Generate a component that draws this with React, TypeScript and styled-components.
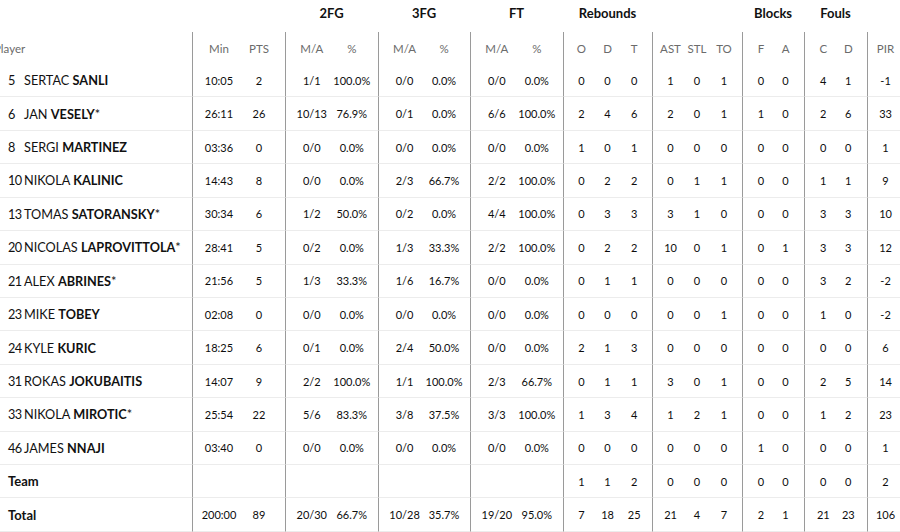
import React from "react";
import styled, { createGlobalStyle } from "styled-components";

const GlobalStyle = createGlobalStyle`
  html, body { margin: 0; padding: 0; background: #fff; }
  body { width: 900px; height: 532px; overflow: hidden; font-family: Lato, "Liberation Sans", sans-serif; color: #111; }
`;

type Player = {
  no: string;
  first: string;
  last: string;
  starter?: boolean;
  stats: string[];
};

const players: Player[] = [
  { no: "5", first: "SERTAC", last: "SANLI", stats: ["10:05", "2", "1/1", "100.0%", "0/0", "0.0%", "0/0", "0.0%", "0", "0", "0", "1", "0", "1", "0", "0", "4", "1", "-1"] },
  { no: "6", first: "JAN", last: "VESELY", starter: true, stats: ["26:11", "26", "10/13", "76.9%", "0/1", "0.0%", "6/6", "100.0%", "2", "4", "6", "2", "0", "1", "1", "0", "2", "6", "33"] },
  { no: "8", first: "SERGI", last: "MARTINEZ", stats: ["03:36", "0", "0/0", "0.0%", "0/0", "0.0%", "0/0", "0.0%", "1", "0", "1", "0", "0", "0", "0", "0", "0", "0", "1"] },
  { no: "10", first: "NIKOLA", last: "KALINIC", stats: ["14:43", "8", "0/0", "0.0%", "2/3", "66.7%", "2/2", "100.0%", "0", "2", "2", "0", "1", "1", "0", "0", "1", "1", "9"] },
  { no: "13", first: "TOMAS", last: "SATORANSKY", starter: true, stats: ["30:34", "6", "1/2", "50.0%", "0/2", "0.0%", "4/4", "100.0%", "0", "3", "3", "3", "1", "0", "0", "0", "3", "3", "10"] },
  { no: "20", first: "NICOLAS", last: "LAPROVITTOLA", starter: true, stats: ["28:41", "5", "0/2", "0.0%", "1/3", "33.3%", "2/2", "100.0%", "0", "2", "2", "10", "0", "1", "0", "1", "3", "3", "12"] },
  { no: "21", first: "ALEX", last: "ABRINES", starter: true, stats: ["21:56", "5", "1/3", "33.3%", "1/6", "16.7%", "0/0", "0.0%", "0", "1", "1", "0", "0", "0", "0", "0", "3", "2", "-2"] },
  { no: "23", first: "MIKE", last: "TOBEY", stats: ["02:08", "0", "0/0", "0.0%", "0/0", "0.0%", "0/0", "0.0%", "0", "0", "0", "0", "0", "1", "0", "0", "1", "0", "-2"] },
  { no: "24", first: "KYLE", last: "KURIC", stats: ["18:25", "6", "0/1", "0.0%", "2/4", "50.0%", "0/0", "0.0%", "2", "1", "3", "0", "0", "0", "0", "0", "0", "0", "6"] },
  { no: "31", first: "ROKAS", last: "JOKUBAITIS", stats: ["14:07", "9", "2/2", "100.0%", "1/1", "100.0%", "2/3", "66.7%", "0", "1", "1", "3", "0", "1", "0", "0", "2", "5", "14"] },
  { no: "33", first: "NIKOLA", last: "MIROTIC", starter: true, stats: ["25:54", "22", "5/6", "83.3%", "3/8", "37.5%", "3/3", "100.0%", "1", "3", "4", "1", "2", "1", "0", "0", "1", "2", "23"] },
  { no: "46", first: "JAMES", last: "NNAJI", stats: ["03:40", "0", "0/0", "0.0%", "0/0", "0.0%", "0/0", "0.0%", "0", "0", "0", "0", "0", "0", "1", "0", "0", "0", "1"] },
];

const teamStats = ["", "", "", "", "", "", "", "", "1", "1", "2", "0", "0", "0", "0", "0", "0", "0", "2"];
const totalStats = ["200:00", "89", "20/30", "66.7%", "10/28", "35.7%", "19/20", "95.0%", "7", "18", "25", "21", "4", "7", "2", "1", "21", "23", "106"];

const groups = [
  { label: "", subs: ["Min", "PTS"], widths: [47, 46] },
  { label: "2FG", subs: ["M/A", "%"], widths: [46.5, 46.5] },
  { label: "3FG", subs: ["M/A", "%"], widths: [46, 46] },
  { label: "FT", subs: ["M/A", "%"], widths: [46.5, 46.5] },
  { label: "Rebounds", subs: ["O", "D", "T"], widths: [29.67, 29.66, 29.67] },
  { label: "", subs: ["AST", "STL", "TO"], widths: [30, 30, 30] },
  { label: "Blocks", subs: ["F", "A"], widths: [31, 31] },
  { label: "Fouls", subs: ["C", "D"], widths: [31.5, 31.5] },
  { label: "", subs: ["PIR"], widths: [36] },
];

type Pos = { first: boolean; last: boolean; single: boolean };
const positions: Pos[] = groups.flatMap((g) =>
  g.subs.map((_, i) => ({
    first: i === 0,
    last: i === g.subs.length - 1,
    single: g.subs.length === 1,
  }))
);

const Wrapper = styled.div`
  width: 900px;
  height: 532px;
  overflow: hidden;
`;

const Table = styled.table`
  margin-left: -6px;
  width: 909px;
  table-layout: fixed;
  border-collapse: separate;
  border-spacing: 0;
`;

const GroupRow = styled.tr`
  height: 32px;
`;

const GroupTh = styled.th`
  padding: 0 0 7px 0;
  font-size: 13px;
  font-weight: 700;
  color: #111;
  text-align: center;
  vertical-align: middle;
  white-space: nowrap;
`;

const SubRow = styled.tr`
  height: 32px;
`;

const SubTh = styled.th<{ $first: boolean; $last: boolean; $single: boolean }>`
  padding: 0 ${(p) => (p.$last && !p.$single ? 6 : 0)}px 0 ${(p) => (p.$first && !p.$single ? 6 : 0)}px;
  border-left: ${(p) => (p.$first ? "1px solid #9a9a9a" : "none")};
  font-size: 11.5px;
  font-weight: 400;
  color: #6b6b6b;
  text-align: center;
  vertical-align: middle;
  white-space: nowrap;
`;

const PlayerTh = styled.th`
  padding: 0;
  font-size: 11.5px;
  font-weight: 400;
  color: #6b6b6b;
  text-align: left;
  vertical-align: middle;
`;

const BodyRow = styled.tr`
  height: 33.43px;
`;

const NameTd = styled.td`
  padding: 0 0 0 14px;
  border-bottom: 1px solid #ececec;
  font-size: 12.7px;
  color: #111;
  white-space: nowrap;
  vertical-align: middle;
`;

const StatTd = styled.td<{ $first: boolean; $last: boolean; $single: boolean }>`
  padding: 0 ${(p) => (p.$last && !p.$single ? 6 : 0)}px 0 ${(p) => (p.$first && !p.$single ? 6 : 0)}px;
  border-left: ${(p) => (p.$first ? "1px solid #9a9a9a" : "none")};
  border-bottom: 1px solid #ececec;
  font-size: 11px;
  color: #0d0d0d;
  text-align: center;
  vertical-align: middle;
  white-space: nowrap;
`;

const Num = styled.span`
  display: inline-block;
  width: 16px;
  letter-spacing: -0.6px;
`;

const Last = styled.b`
  font-weight: 700;
`;

const Star = styled.span`
  font-weight: 400;
`;

const Label = styled.b`
  font-weight: 700;
  font-size: 13px;
`;

function StatCells({ stats }: { stats: string[] }) {
  return (
    <>
      {stats.map((s, i) => (
        <StatTd key={i} $first={positions[i].first} $last={positions[i].last} $single={positions[i].single}>
          {s}
        </StatTd>
      ))}
    </>
  );
}

export default function App() {
  let idx = 0;
  const subHeads = groups.flatMap((g, gi) =>
    g.subs.map((s, i) => {
      const p = positions[idx++];
      return (
        <SubTh key={`${gi}-${i}`} $first={p.first} $last={p.last} $single={p.single}>
          {s}
        </SubTh>
      );
    })
  );
  return (
    <Wrapper>
      <GlobalStyle />
      <Table>
        <colgroup>
          <col style={{ width: 198 }} />
          {groups.flatMap((g, gi) => g.widths.map((w, i) => <col key={`${gi}-${i}`} style={{ width: w }} />))}
        </colgroup>
        <thead>
          <GroupRow>
            <GroupTh />
            {groups.map((g, i) => (
              <GroupTh key={i} colSpan={g.subs.length}>
                {g.label}
              </GroupTh>
            ))}
          </GroupRow>
          <SubRow>
            <PlayerTh>Player</PlayerTh>
            {subHeads}
          </SubRow>
        </thead>
        <tbody>
          {players.map((pl) => (
            <BodyRow key={pl.no}>
              <NameTd>
                <Num>{pl.no}</Num>
                {pl.first} <Last>{pl.last}</Last>
                {pl.starter && <Star>*</Star>}
              </NameTd>
              <StatCells stats={pl.stats} />
            </BodyRow>
          ))}
          <BodyRow>
            <NameTd>
              <Label>Team</Label>
            </NameTd>
            <StatCells stats={teamStats} />
          </BodyRow>
          <BodyRow>
            <NameTd>
              <Label>Total</Label>
            </NameTd>
            <StatCells stats={totalStats} />
          </BodyRow>
        </tbody>
      </Table>
    </Wrapper>
  );
}
